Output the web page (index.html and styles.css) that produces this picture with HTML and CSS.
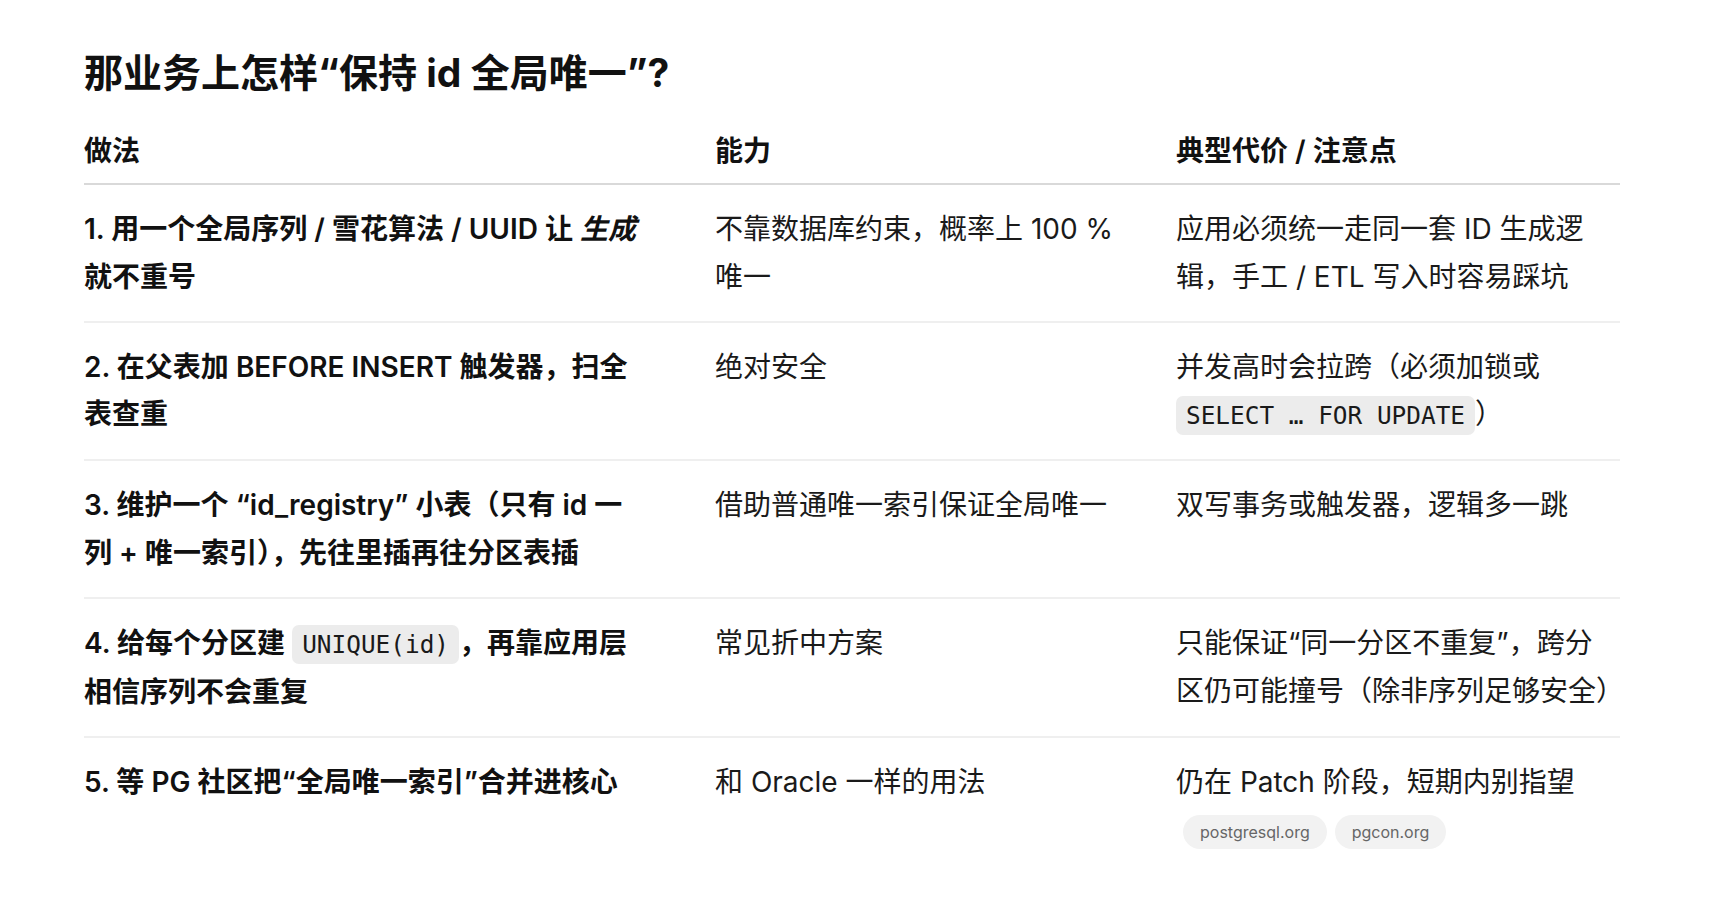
FILE: index.html
```html
<!DOCTYPE html>
<html lang="zh-CN">
<head>
<meta charset="utf-8">
<title>保持 id 全局唯一</title>
<link rel="stylesheet" href="styles.css">
</head>
<body>
<main class="page">
  <h1 class="title">那业务上怎样“保持 id 全局唯一”?</h1>
  <table class="grid">
    <colgroup>
      <col class="col-method">
      <col class="col-ability">
      <col class="col-cost">
    </colgroup>
    <thead>
      <tr>
        <th>做法</th>
        <th>能力</th>
        <th>典型代价 / 注意点</th>
      </tr>
    </thead>
    <tbody>
      <tr>
        <td class="method">1. 用一个全局序列 / 雪花算法 / UUID 让 <em>生成</em><br>就不重号</td>
        <td>不靠数据库约束，概率上 100 %<br>唯一</td>
        <td>应用必须统一走同一套 ID 生成逻<br>辑，手工 / ETL 写入时容易踩坑</td>
      </tr>
      <tr>
        <td class="method">2. 在父表加 BEFORE INSERT 触发器，扫全<br>表查重</td>
        <td>绝对安全</td>
        <td>并发高时会拉跨（必须加锁或<br><code>SELECT … FOR UPDATE</code>）</td>
      </tr>
      <tr>
        <td class="method">3. 维护一个 “id_registry” 小表（只有 id 一<br>列 + 唯一索引），先往里插再往分区表插</td>
        <td>借助普通唯一索引保证全局唯一</td>
        <td>双写事务或触发器，逻辑多一跳</td>
      </tr>
      <tr>
        <td class="method">4. 给每个分区建 <code>UNIQUE(id)</code>，再靠应用层<br>相信序列不会重复</td>
        <td>常见折中方案</td>
        <td>只能保证“同一分区不重复”，跨分<br>区仍可能撞号（除非序列足够安全）</td>
      </tr>
      <tr>
        <td class="method">5. 等 PG 社区把“全局唯一索引”合并进核心</td>
        <td>和 Oracle 一样的用法</td>
        <td>仍在 Patch 阶段，短期内别指望
          <div class="sources">
            <span class="pill">postgresql.org</span>
            <span class="pill">pgcon.org</span>
          </div>
        </td>
      </tr>
    </tbody>
  </table>
</main>
</body>
</html>
```

FILE: styles.css
```css
html, body {
  margin: 0;
  padding: 0;
  background: #ffffff;
}

body {
  font-family: "Inter", "Noto Sans CJK SC", sans-serif;
  color: #1a1a1a;
}

.page {
  width: 1536px;
  padding: 48px 0 0 84px;
}

.title {
  margin: 0 0 20px;
  font-size: 39px;
  line-height: 49px;
  font-weight: 700;
  color: #111111;
}

.grid {
  width: 1536px;
  table-layout: fixed;
  border-collapse: separate;
  border-spacing: 0;
  font-size: 28px;
  line-height: 47.6px;
}

.col-method { width: 631px; }
.col-ability { width: 461px; }
.col-cost { width: 444px; }

.grid th {
  text-align: left;
  font-weight: 600;
  color: #111111;
  padding: 11px 16px 7.4px 0;
  border-bottom: 2px solid #d9d9d9;
}

.grid td {
  vertical-align: top;
  white-space: nowrap;
  padding: 21px 16px 19.5px 0;
  border-bottom: 2px solid #efefef;
}

.grid th:last-child,
.grid td:last-child {
  padding-right: 0;
}

.grid tbody tr:last-child td {
  border-bottom: none;
}

.grid td.method {
  font-weight: 600;
  color: #111111;
}

.grid em {
  font-style: italic;
}

code {
  font-family: "DejaVu Sans Mono", monospace;
  font-size: 24.4px;
  font-weight: 400;
  background: #ececec;
  color: #1a1a1a;
  padding: 4.8px 10px;
  border-radius: 7px;
}

.sources {
  display: flex;
  gap: 8px;
  margin-top: 9px;
  padding-left: 7px;
}

.pill {
  display: inline-block;
  height: 34px;
  line-height: 34px;
  padding: 0 17px;
  border-radius: 17px;
  background: #f2f2f2;
  color: #666666;
  font-size: 16px;
  font-weight: 400;
}
```
